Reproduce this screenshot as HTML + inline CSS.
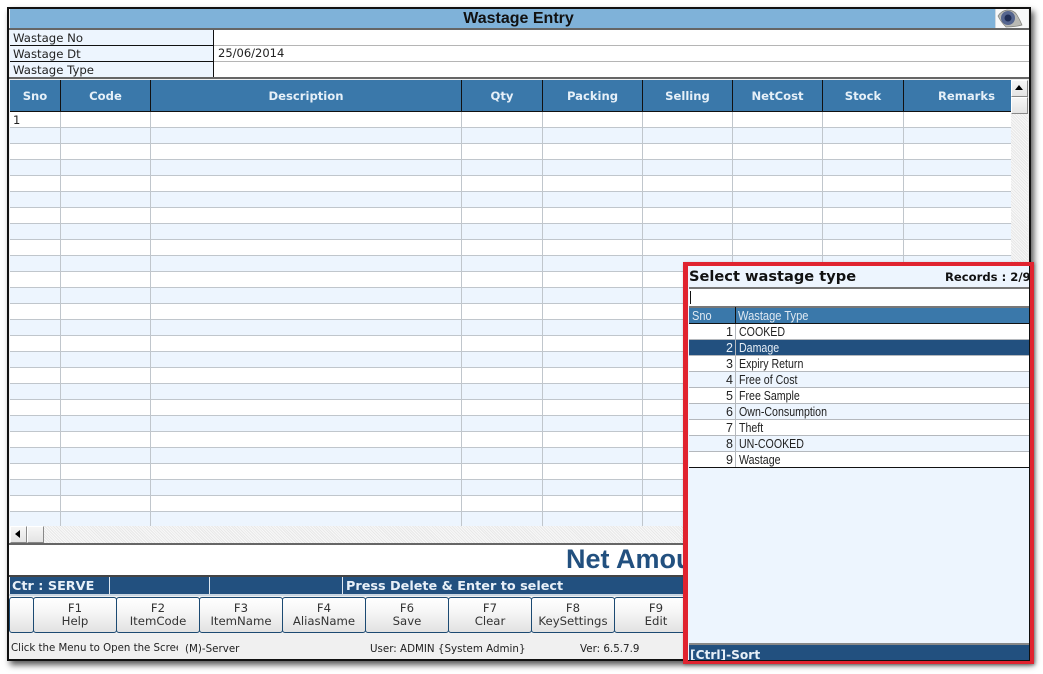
<!DOCTYPE html>
<html><head><meta charset="utf-8"><style>
html,body{margin:0;padding:0;width:1043px;height:674px;overflow:hidden;background:#fff}
div,span{position:absolute;box-sizing:border-box;white-space:nowrap}
body{font-family:"DejaVu Sans","Liberation Sans",sans-serif;font-size:11px;color:#222}
.lab{left:10px;width:204px;height:16px;background:#edf5fe;border-bottom:1px solid #111;border-right:1px solid #111;padding-left:3px;line-height:17px;font-size:11.7px}
.vl{top:80px;width:1px;height:31px;background:#111}
.gl{top:112px;width:1px;height:414px;background:#c0c6cc}
.h{top:80px;height:31px;line-height:33px;color:#e6f0f8;font-weight:bold;font-size:11.6px;text-align:center}
.btn{top:597px;width:84px;height:36px;border:1px solid #1c4a72;border-radius:3px;background:linear-gradient(#fff,#f6f6f6 40%,#e2e2e2);text-align:center;line-height:13px;padding-top:4px;font-size:11.7px;color:#333}
.r{left:689px;height:16px;border-bottom:1px solid #b4b8bd;font-family:"Liberation Sans",sans-serif;font-size:12.5px;line-height:16px;color:#222}
.r .n{left:0;width:44px;text-align:right}
.r .t{left:50px;transform:scaleX(.85);transform-origin:0 0}
.r .s{left:46px;top:0;width:1px;height:16px;background:#b4b8bd}
.hatch{background-color:#f1f1f1;background-image:repeating-linear-gradient(45deg,#e8e8e8 0 1px,#f8f8f8 1px 2px)}
.sb{background:linear-gradient(#f6f6f6,#e4e4e4);border:1px solid #fff;border-right-color:#888;border-bottom-color:#888}
.st{top:642px;font-size:10.3px;line-height:14px}
</style></head><body>
<div style="left:7px;top:7px;width:1024px;height:654px;background:#f0f0f0;border:2px solid #111;box-shadow:3px 4px 6px rgba(0,0,0,.65)"></div>

<div style="left:10px;top:9px;width:1018px;height:19px;background:#7fb2d9;text-align:center;font:bold 16px/20px 'Liberation Sans',sans-serif;color:#111;padding-right:1px">Wastage Entry</div>
<div style="left:995px;top:9px;width:33px;height:19px;background:#f7f8f9;border-left:1px solid #cfd8e0">
<svg width="32" height="19" style="position:absolute;left:0;top:0" viewBox="0 0 32 19"><path d="M2 7 Q5 2 11 1 Q18 1 21 6 Q24 11 26 16 Q19 18 10 18 Q5 13 2 7Z" fill="#b9b9b4" stroke="#7d7d78" stroke-width=".7"/><circle cx="12" cy="9" r="7" fill="#55658f"/><circle cx="12" cy="9" r="3.5" fill="#1f2d55"/></svg></div>
<div style="left:9px;top:28px;width:1020px;height:2px;background:#666"></div>

<div style="left:214px;top:30px;width:815px;height:48px;background:#fff"></div>
<div style="left:214px;top:45px;width:815px;height:1px;background:#b5b5b5"></div>
<div style="left:214px;top:61px;width:815px;height:1px;background:#b5b5b5"></div>
<div class="lab" style="top:30px">Wastage No</div>
<div class="lab" style="top:46px">Wastage Dt</div>
<div class="lab" style="top:62px">Wastage Type</div>
<div style="left:218px;top:46px;line-height:15px;font-size:11.5px">25/06/2014</div>
<div style="left:9px;top:77px;width:1020px;height:2px;background:#666"></div>

<div style="left:10px;top:80px;width:1001px;height:31px;background:#3a78aa"></div>
<div class="h" style="left:10px;width:50px">Sno</div>
<div class="h" style="left:61px;width:89px">Code</div>
<div class="h" style="left:151px;width:310px">Description</div>
<div class="h" style="left:462px;width:80px">Qty</div>
<div class="h" style="left:543px;width:99px">Packing</div>
<div class="h" style="left:643px;width:89px">Selling</div>
<div class="h" style="left:733px;width:89px">NetCost</div>
<div class="h" style="left:823px;width:80px">Stock</div>
<div class="h" style="left:904px;width:107px;text-align:right;padding-right:16px">Remarks</div>
<div class="vl" style="left:60px"></div><div class="vl" style="left:150px"></div><div class="vl" style="left:461px"></div><div class="vl" style="left:542px"></div><div class="vl" style="left:642px"></div><div class="vl" style="left:732px"></div><div class="vl" style="left:822px"></div><div class="vl" style="left:903px"></div>
<div style="left:10px;top:111px;width:1001px;height:1px;background:#111"></div>

<div style="left:10px;top:112px;width:1001px;height:414px;background:repeating-linear-gradient(#fff 0 15px,#c0c6cc 15px 16px,#edf5fe 16px 31px,#c0c6cc 31px 32px)"></div>
<div class="gl" style="left:60px"></div><div class="gl" style="left:150px"></div><div class="gl" style="left:461px"></div><div class="gl" style="left:542px"></div><div class="gl" style="left:642px"></div><div class="gl" style="left:732px"></div><div class="gl" style="left:822px"></div><div class="gl" style="left:903px"></div>
<div style="left:13px;top:112px;line-height:16px;font-size:11.5px">1</div>

<div class="hatch" style="left:1011px;top:80px;width:17px;height:464px"></div>
<div class="sb" style="left:1011px;top:80px;width:17px;height:17px"></div>
<div style="left:1015px;top:85px;width:0;height:0;border:4px solid transparent;border-top:0;border-bottom:5px solid #000"></div>
<div class="sb" style="left:1011px;top:97px;width:17px;height:17px"></div>

<div class="hatch" style="left:10px;top:526px;width:1001px;height:17px"></div>
<div class="sb" style="left:10px;top:526px;width:17px;height:17px"></div>
<div style="left:15px;top:530px;width:0;height:0;border:4px solid transparent;border-left:0;border-right:5px solid #000"></div>
<div class="sb" style="left:27px;top:526px;width:17px;height:17px"></div>
<div style="left:9px;top:543px;width:1020px;height:2px;background:#666"></div>

<div style="left:9px;top:545px;width:1020px;height:30px;background:#fff"></div>
<div style="left:566px;top:543px;font:bold 27px/32px 'Liberation Sans',sans-serif;color:#22507f">Net Amount</div>
<div style="left:9px;top:575px;width:1020px;height:2px;background:#444"></div>

<div style="left:10px;top:577px;width:1019px;height:17px;background:#22507f"></div>
<div style="left:109px;top:577px;width:1px;height:17px;background:#dfe8f0"></div>
<div style="left:209px;top:577px;width:1px;height:17px;background:#dfe8f0"></div>
<div style="left:342px;top:577px;width:1px;height:17px;background:#dfe8f0"></div>
<div style="left:12px;top:577px;line-height:19px;font-weight:bold;font-size:12.8px;color:#e8f0f8">Ctr : SERVE</div>
<div style="left:346px;top:577px;line-height:19px;font-weight:bold;font-size:12.8px;color:#e8f0f8">Press Delete &amp; Enter to select</div>
<div style="left:9px;top:594px;width:1020px;height:2px;background:#c9d6e2"></div>

<div class="btn" style="left:9px;width:25px"></div>
<div class="btn" style="left:33px">F1<br>Help</div>
<div class="btn" style="left:116px">F2<br>ItemCode</div>
<div class="btn" style="left:199px">F3<br>ItemName</div>
<div class="btn" style="left:282px">F4<br>AliasName</div>
<div class="btn" style="left:365px">F6<br>Save</div>
<div class="btn" style="left:448px">F7<br>Clear</div>
<div class="btn" style="left:531px">F8<br>KeySettings</div>
<div class="btn" style="left:614px">F9<br>Edit</div>
<div class="btn" style="left:697px"></div>

<div class="st" style="left:11px;width:167px;overflow:hidden;color:#222;font-size:10.2px">Click the Menu to Open the Screen</div>
<div class="st" style="left:185px">(M)-Server</div>
<div class="st" style="left:370px">User: ADMIN {System Admin}</div>
<div class="st" style="left:580px">Ver: 6.5.7.9</div>

<!-- popup -->
<div style="left:683px;top:262px;width:351px;height:402px;background:#e0232f;box-shadow:1px 1px 3px rgba(0,0,0,.3)"></div>
<div style="left:688px;top:266px;width:342px;height:395px;background:#edf5fe;border-right:1px solid #111;border-bottom:1px solid #111;overflow:hidden">
<div style="left:1px;top:1px;font-weight:bold;font-size:14.6px;line-height:20px;color:#111">Select wastage type</div>
<div style="left:257px;top:3px;font-weight:bold;font-size:11.6px;line-height:16px;color:#111">Records : 2/9</div>
<div style="left:1px;top:21px;width:341px;height:2px;background:#777"></div>
<div style="left:1px;top:23px;width:341px;height:17px;background:#fff"></div>
<div style="left:2px;top:25px;width:1px;height:13px;background:#111"></div>
<div style="left:1px;top:40px;width:341px;height:2px;background:#777"></div>
</div>
<div style="left:689px;top:308px;width:340px;height:15px;background:#3a78aa"></div>
<div style="left:735px;top:307px;width:1px;height:16px;background:#111"></div>
<div style="left:692px;top:308px;font:12.5px/16px 'Liberation Sans',sans-serif;color:#dfe9f2;transform:scaleX(.88);transform-origin:0 0">Sno</div>
<div style="left:738px;top:308px;font:12.5px/16px 'Liberation Sans',sans-serif;color:#dfe9f2;transform:scaleX(.89);transform-origin:0 0">Wastage Type</div>
<div style="left:689px;top:323px;width:340px;height:1px;background:#111"></div>

<div class="r" style="top:324px;background:#fff;width:340px"><span class="n">1</span><span class="s"></span><span class="t">COOKED</span></div>
<div class="r" style="top:340px;background:#22507f;color:#e6eef6;width:340px"><span class="n">2</span><span class="s"></span><span class="t">Damage</span></div>
<div class="r" style="top:356px;background:#fff;width:340px"><span class="n">3</span><span class="s"></span><span class="t">Expiry Return</span></div>
<div class="r" style="top:372px;background:#edf5fe;width:340px"><span class="n">4</span><span class="s"></span><span class="t">Free of Cost</span></div>
<div class="r" style="top:388px;background:#fff;width:340px"><span class="n">5</span><span class="s"></span><span class="t">Free Sample</span></div>
<div class="r" style="top:404px;background:#edf5fe;width:340px"><span class="n">6</span><span class="s"></span><span class="t">Own-Consumption</span></div>
<div class="r" style="top:420px;background:#fff;width:340px"><span class="n">7</span><span class="s"></span><span class="t">Theft</span></div>
<div class="r" style="top:436px;background:#edf5fe;width:340px"><span class="n">8</span><span class="s"></span><span class="t">UN-COOKED</span></div>
<div class="r" style="top:452px;background:#fff;width:340px"><span class="n">9</span><span class="s"></span><span class="t">Wastage</span></div>
<div style="left:689px;top:467px;width:340px;height:1px;background:#111"></div>

<div style="left:689px;top:643px;width:340px;height:2px;background:#888"></div>
<div style="left:689px;top:645px;width:340px;height:15px;background:#22507f;overflow:hidden;padding-left:1px;font-weight:bold;font-size:12.2px;line-height:20px;color:#e8f0f8">[Ctrl]-Sort</div>
</body></html>
